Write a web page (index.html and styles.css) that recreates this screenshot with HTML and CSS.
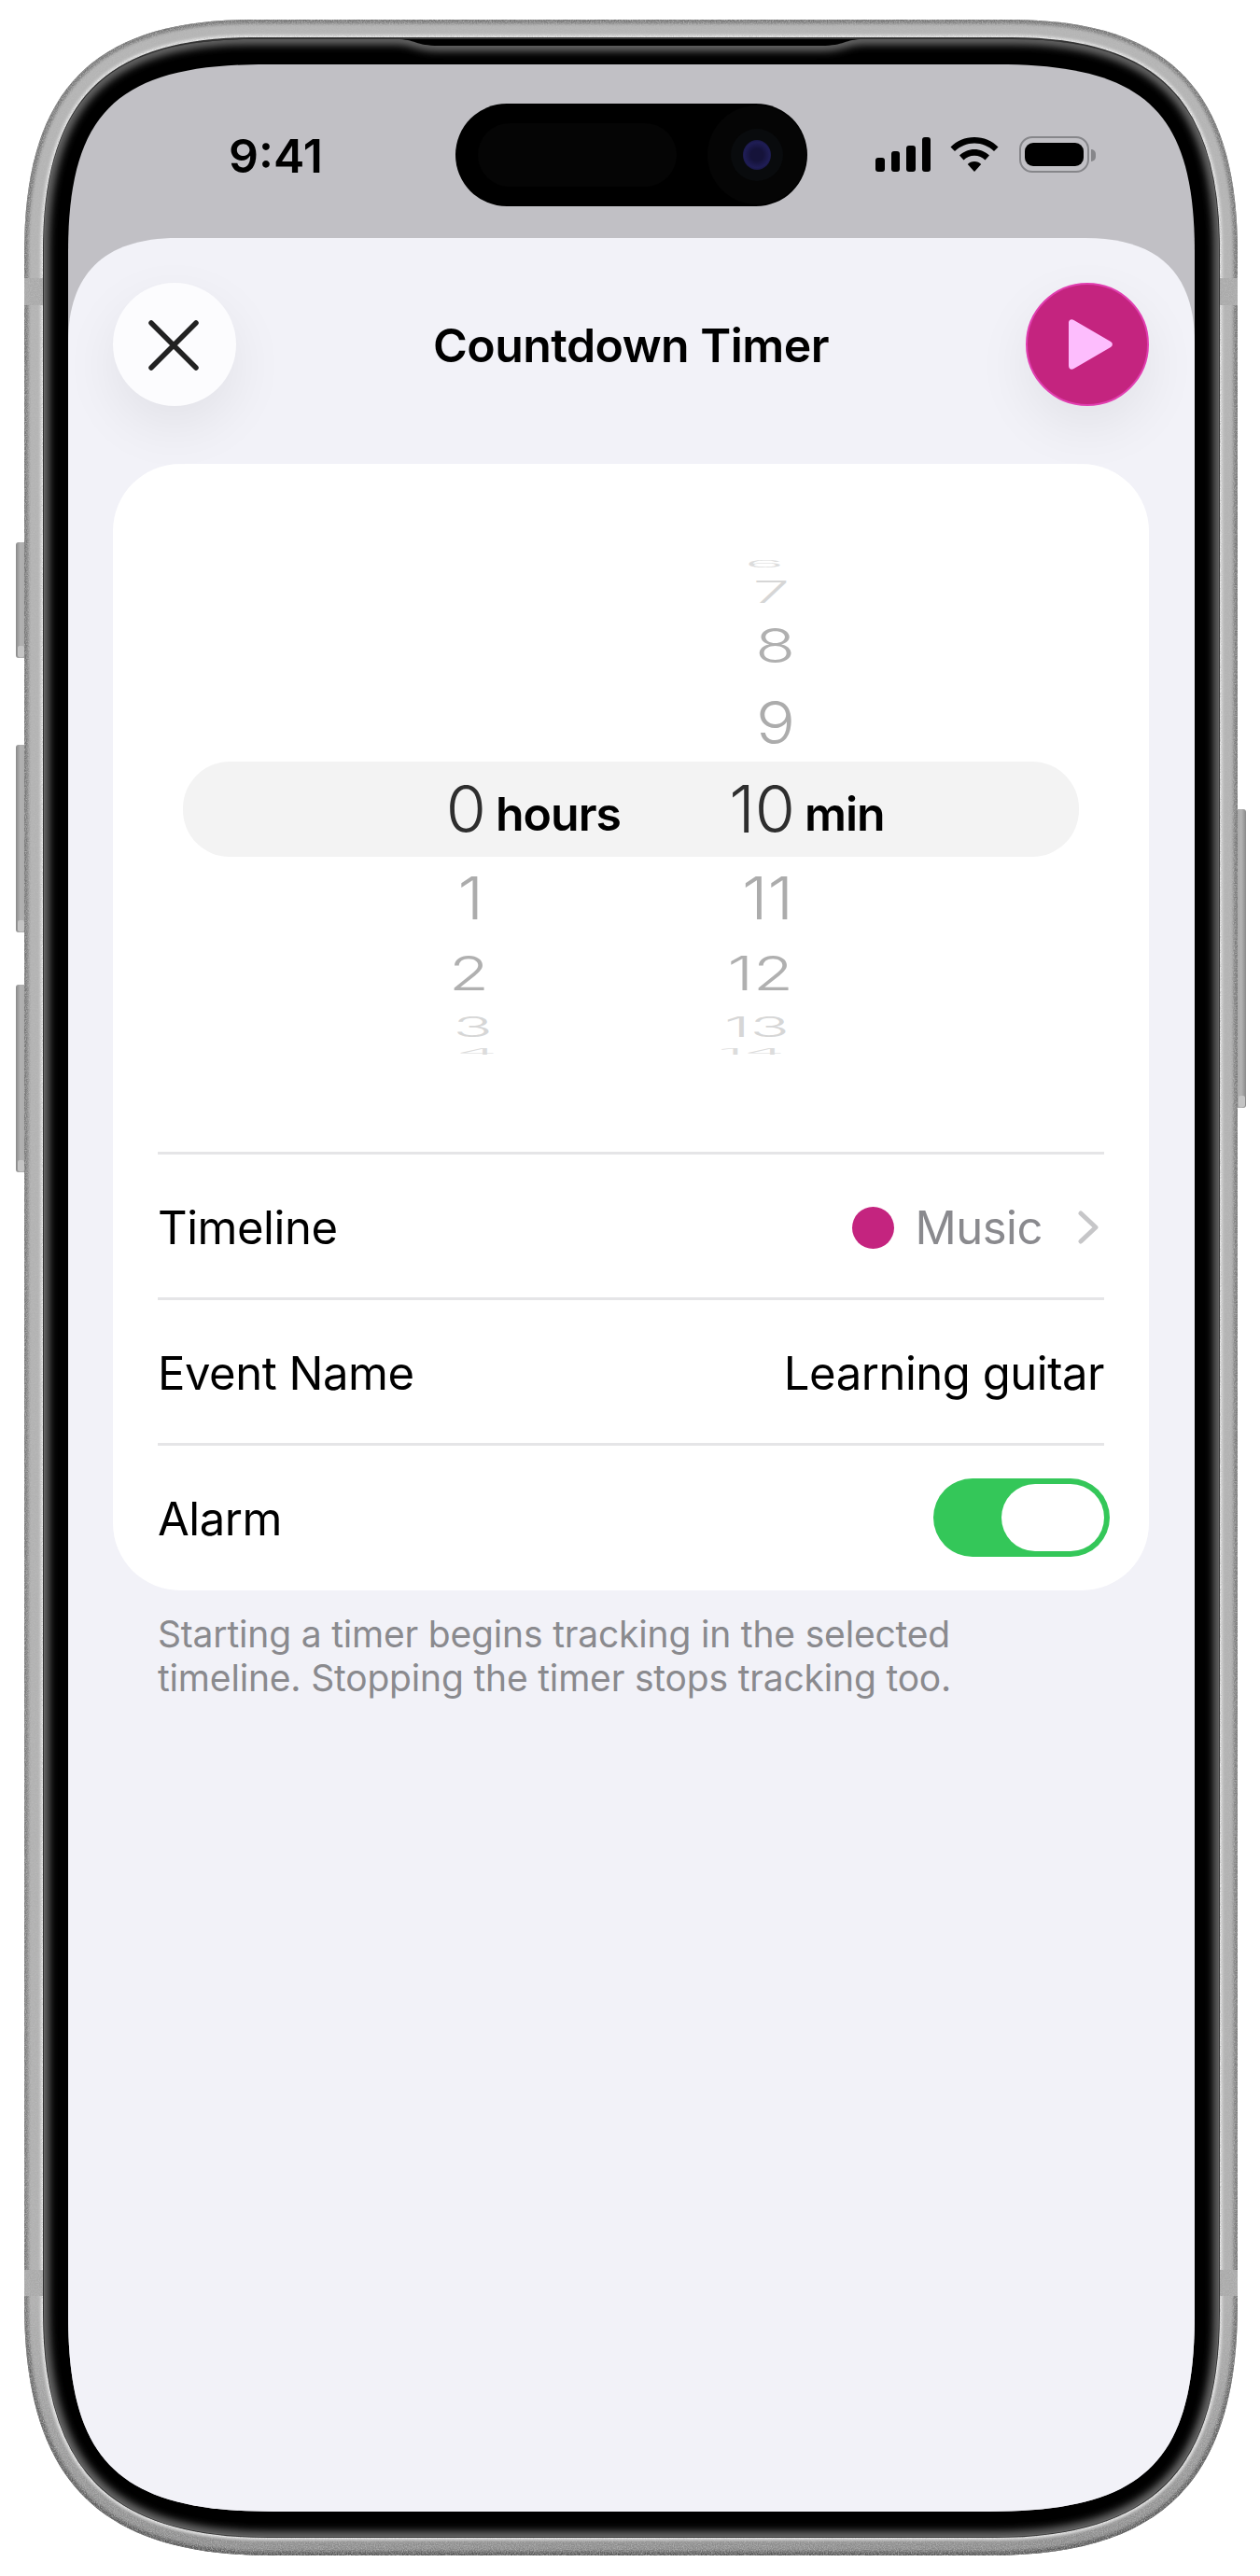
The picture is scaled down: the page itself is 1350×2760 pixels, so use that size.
FILE: index.html
```html
<!DOCTYPE html>
<html lang="en">
<head>
    <meta charset="UTF-8">
    <meta name="viewport" content="width=device-width, initial-scale=1.0">
    <title>Countdown Timer</title>
    <link rel="stylesheet" href="styles.css">
</head>
<body>

<div class="device">
    <!-- Phone body: side buttons, metal band, black bezel -->
    <svg class="frame" width="1350" height="2760" viewBox="0 0 1350 2760">
        <defs>
            <path id="bodyShape" d="M271 21H1081C1252.5 21 1326 96 1326 271V2468C1326 2657 1246.5 2738 1061 2738H291C105.5 2738 26 2657 26 2468V271C26 96 99.5 21 271 21Z"/>
            <path id="bezelShape" d="M269 41H1084C1239.4 41 1306 108.8 1306 267V2478C1306 2646 1234 2718 1066 2718H287C119 2718 47 2646 47 2478V267C47 108.8 113.6 41 269 41Z"/>
            <path id="glowShape" d="M269 42H425C445 42 445 49 470 49H880C905 49 905 42 925 42H1084C1239.4 42 1306 108.8 1306 267V2478C1306 2646 1234 2718 1066 2718H287C119 2718 47 2646 47 2478V267C47 108.8 113.6 42 269 42Z"/>
            <clipPath id="bodyClip"><use href="#bodyShape"/></clipPath>
            <clipPath id="glowClip"><use href="#glowShape"/></clipPath>
            <linearGradient id="metal" x1="0" y1="0" x2="0" y2="1">
                <stop offset="0" stop-color="#b4b4b4"/>
                <stop offset="0.9" stop-color="#b0b0b0"/>
                <stop offset="1" stop-color="#8a8a8a"/>
            </linearGradient>
            <linearGradient id="edge" x1="0" y1="0" x2="0" y2="1">
                <stop offset="0" stop-color="#747474"/>
                <stop offset="0.85" stop-color="#7c7c7c"/>
                <stop offset="1" stop-color="#555"/>
            </linearGradient>
            <linearGradient id="sideBtn" x1="0" y1="0" x2="1" y2="0">
                <stop offset="0" stop-color="#8a8a8a"/>
                <stop offset="0.35" stop-color="#b2b2b2"/>
                <stop offset="1" stop-color="#a6a6a6"/>
            </linearGradient>
            <filter id="blur1" x="-5%" y="-5%" width="110%" height="110%"><feGaussianBlur stdDeviation="1.5"/></filter>
            <filter id="blur4" x="-5%" y="-5%" width="110%" height="110%"><feGaussianBlur stdDeviation="4"/></filter>
            <filter id="grain" x="0" y="0" width="100%" height="100%">
                <feTurbulence type="fractalNoise" baseFrequency="0.8" numOctaves="2" seed="4"/>
                <feColorMatrix values="0 0 0 0 0.5  0 0 0 0 0.5  0 0 0 0 0.5  1.6 0 0 0 -0.55"/>
            </filter>
        </defs>

        <g class="side-buttons">
            <rect x="17" y="581" width="14" height="124" rx="3" fill="url(#sideBtn)"/>
            <rect x="17" y="798" width="14" height="201" rx="3" fill="url(#sideBtn)"/>
            <rect x="17" y="1055" width="14" height="201" rx="3" fill="url(#sideBtn)"/>
            <rect x="1321" y="867" width="14" height="320" rx="3" fill="url(#sideBtn)" transform="rotate(180 1328 1027)"/>
            <rect x="19" y="692" width="7" height="12" rx="2" fill="#c4c4c4"/>
            <rect x="19" y="986" width="7" height="12" rx="2" fill="#c4c4c4"/>
            <rect x="19" y="1243" width="7" height="12" rx="2" fill="#c4c4c4"/>
            <rect x="1327" y="1174" width="7" height="12" rx="2" fill="#c4c4c4"/>
        </g>

        <use href="#bodyShape" fill="url(#metal)"/>
        <g clip-path="url(#bodyClip)">
            <use href="#bodyShape" fill="none" stroke="url(#edge)" stroke-width="9" filter="url(#blur1)"/>
            <use href="#bezelShape" fill="none" stroke="#ececec" stroke-width="7" filter="url(#blur1)"/>
            <!-- antenna bands -->
            <g fill="#a9a9a9">
                <rect x="26" y="298" width="20" height="29"/>
                <rect x="1306" y="298" width="20" height="29"/>
                <rect x="26" y="2432" width="20" height="28"/>
                <rect x="1306" y="2432" width="20" height="28"/>
            </g>
            <rect x="0" y="0" width="1350" height="2760" filter="url(#grain)"/>
        </g>
        <use href="#bezelShape" fill="#000" stroke="#333" stroke-width="2"/>
        <g clip-path="url(#glowClip)">
            <use href="#glowShape" fill="none" stroke="#707070" stroke-width="11" filter="url(#blur4)"/>
        </g>
    </svg>

    <div class="screen">
        <div class="status-bar">
            <span class="clock">9:41</span>
            <div class="status-icons">
                <div class="signal">
                    <i class="bar bar-1"></i><i class="bar bar-2"></i><i class="bar bar-3"></i><i class="bar bar-4"></i>
                </div>
                <svg class="wifi" width="52" height="37" viewBox="0 0 52 37">
                    <path d="M26 0C16 0 7 4 .5 10.500L5 15C11 9.500 18 6.500 26 6.500S41 9.500 47 15L51.500 10.500C45 4 36 0 26 0Z"/>
                    <path d="M26 13C20 13 14.500 15.500 10 19.500L14.500 24.500C17.500 21.500 21.500 19.800 26 19.800S34.500 21.500 37.500 24.500L42 19.500C37.500 15.500 32 13 26 13Z"/>
                    <path d="M26 26C23 26 20.500 27.200 18.800 29L26 37 33.200 29C31.500 27.200 29 26 26 26Z"/>
                </svg>
                <div class="battery"><div class="battery-level"></div></div>
                <div class="battery-nub"></div>
            </div>
        </div>

        <!-- Dynamic island -->
        <div class="island">
            <div class="island-pill"></div>
            <div class="camera"><div class="camera-inner"><div class="lens"></div></div></div>
        </div>

        <div class="sheet">
            <div class="header">
                <button class="round-btn close-btn" type="button" aria-label="Close">
                    <svg class="close-icon" width="54" height="54" viewBox="0 0 54 54">
                        <path d="M3 3L51 51M51 3L3 51" fill="none" stroke="#222" stroke-width="5.500" stroke-linecap="round"/>
                    </svg>
                </button>
                <h1 class="title">Countdown Timer</h1>
                <button class="round-btn play-btn" type="button" aria-label="Start">
                    <svg class="play-icon" width="50" height="56" viewBox="0 0 50 56">
                        <path d="M2 5C2 1.500 5 .5 7.500 2L47 25C49.500 26.500 49.500 29.500 47 31L7.500 54C5 55.500 2 54.500 2 51Z" fill="#fdbdfd"/>
                    </svg>
                </button>
            </div>

            <div class="card">
                <!-- Hours and minutes wheels -->
                <div class="picker">
                    <div class="picker-highlight"></div>
                    <div class="wheel wheel-hours">
                        <div class="row row-a"></div>
                        <div class="row row-b"></div>
                        <div class="row row-c"></div>
                        <div class="row row-d"></div>
                        <div class="row row-selected"><span class="num">0</span><span class="unit">hours</span></div>
                        <div class="row row-e"><span class="num">1</span></div>
                        <div class="row row-f"><span class="num">2</span></div>
                        <div class="row row-g"><span class="num">3</span></div>
                        <div class="row row-h"><span class="num">4</span></div>
                    </div>
                    <div class="wheel wheel-minutes">
                        <div class="row row-a"><span class="num">6</span></div>
                        <div class="row row-b"><span class="num">7</span></div>
                        <div class="row row-c"><span class="num">8</span></div>
                        <div class="row row-d"><span class="num">9</span></div>
                        <div class="row row-selected"><span class="num">10</span><span class="unit">min</span></div>
                        <div class="row row-e"><span class="num">11</span></div>
                        <div class="row row-f"><span class="num">12</span></div>
                        <div class="row row-g"><span class="num">13</span></div>
                        <div class="row row-h"><span class="num">14</span></div>
                    </div>
                </div>

                <div class="settings">
                    <div class="setting">
                        <span>Timeline</span>
                        <div class="timeline-value">
                            <i class="dot"></i>
                            <span class="muted">Music</span>
                            <svg class="chevron" width="22" height="36" viewBox="0 0 22 36">
                                <path d="M3 3L19 18L3 33" fill="none" stroke="#c6c6c8" stroke-width="5" stroke-linecap="round" stroke-linejoin="round"/>
                            </svg>
                        </div>
                    </div>
                    <div class="setting">
                        <span>Event Name</span>
                        <span>Learning guitar</span>
                    </div>
                    <div class="setting">
                        <span>Alarm</span>
                        <div class="toggle"><div class="toggle-knob"></div></div>
                    </div>
                </div>
            </div>

            <p class="note">Starting a timer begins tracking in the selected<br>timeline. Stopping the timer stops tracking too.</p>
        </div>
    </div>
</div>

</body>
</html>
```

FILE: styles.css
```css
body {
    margin: 0;
    background-color: #fff;
    font-family: 'Inter', 'Liberation Sans', sans-serif;
    color: #000;
}

.device {
    position: relative;
    width: 1350px;
    height: 2760px;
    padding: 69px 70px 69px 73px;
    box-sizing: border-box;
}

.frame {
    position: absolute;
    top: 0;
    left: 0;
}

.screen {
    position: relative;
    width: 1207px;
    height: 2622px;
    background-color: #c1c0c5;
    clip-path: path('M212 0H995C1154 0 1207 50.5 1207 202V2411C1207 2569 1152 2622 987 2622H220C55 2622 0 2569 0 2411V202C0 50.5 53 0 212 0Z');
}

/* Status bar */
.status-bar {
    height: 186px;
    padding: 73px 106px 0 172px;
    box-sizing: border-box;
    display: flex;
    justify-content: space-between;
}

.clock {
    font-size: 50px;
    font-weight: 600;
    line-height: 50px;
    height: 50px;
}

.status-icons {
    display: flex;
    align-items: flex-start;
    padding-top: 5px;
}

.signal {
    display: flex;
    align-items: flex-end;
    gap: 7px;
    height: 37px;
}

.bar {
    width: 9.500px;
    background-color: #000;
    border-radius: 3px;
}

.bar-1 { height: 15px; }
.bar-2 { height: 22px; }
.bar-3 { height: 28px; }
.bar-4 { height: 37px; }

.wifi {
    margin-left: 21px;
}

.battery {
    margin-left: 22px;
    margin-top: -1px;
    width: 75px;
    height: 39px;
    padding: 5px 4px;
    box-sizing: border-box;
    border: 2.500px solid #86868a;
    border-radius: 14px;
}

.battery-level {
    height: 100%;
    background-color: #000;
    border-radius: 9px;
}

.battery-nub {
    margin: 13px 0 0 2px;
    width: 5px;
    height: 13px;
    background-color: #86868a;
    border-radius: 0 5px 5px 0;
}

.island {
    position: absolute;
    top: 42px;
    left: 415px;
    width: 377px;
    height: 110px;
    background-color: #000;
    border-radius: 55px;
}

.island-pill {
    position: absolute;
    top: 21px;
    left: 24px;
    width: 213px;
    height: 68px;
    background-color: #050505;
    border-radius: 34px;
}

.camera {
    position: absolute;
    top: 2px;
    right: 1px;
    width: 106px;
    height: 106px;
    display: flex;
    align-items: center;
    justify-content: center;
    background-color: #050505;
    border-radius: 50%;
}

.camera-inner {
    width: 56px;
    height: 56px;
    display: flex;
    align-items: center;
    justify-content: center;
    background-color: #090b0d;
    border-radius: 50%;
}

.lens {
    width: 30px;
    height: 32px;
    background: radial-gradient(circle, #15133a 30%, #1f1d55 62%, #08081a 100%);
    border-radius: 50%;
}

/* Sheet */
.sheet {
    height: 2436px;
    padding: 48px 49px 0 48px;
    box-sizing: border-box;
    background-color: #f2f2f8;
    clip-path: path('M117 0H1090C1170 0 1207 40 1207 112V2436H0V112C0 40 37 0 117 0Z');
}

.header {
    display: flex;
    align-items: center;
    justify-content: space-between;
    margin-bottom: 62px;
}

.round-btn {
    width: 132px;
    height: 132px;
    padding: 0;
    display: flex;
    align-items: center;
    justify-content: center;
    border: none;
    border-radius: 50%;
    box-shadow: 0 22px 60px rgba(0, 0, 0, 0.07);
}

.close-btn {
    background-color: #fcfcfe;
}

.close-icon {
    margin: 2px 2px 0 0;
}

.play-btn {
    background-color: #c4247f;
    border: 2px solid #e13fb0;
    box-sizing: border-box;
}

.play-icon {
    margin-left: 7px;
}

.title {
    margin: 0;
    padding-top: 2px;
    font-size: 50px;
    font-weight: 600;
    letter-spacing: -0.55px;
}

.card {
    background-color: #fff;
    border-radius: 72px;
    padding: 98px 0 2px;
}

/* Time picker */
.picker {
    position: relative;
    display: flex;
    padding-bottom: 100px;
}

.picker-highlight {
    position: absolute;
    top: 221px;
    left: 75px;
    width: 960px;
    height: 102px;
    background-color: #f3f3f3;
    border-radius: 50px;
}

.wheel {
    position: relative;
    display: flex;
    flex-direction: column;
    font-size: 70px;
    font-weight: 330;
}

.wheel-hours {
    width: 548px;
}

.wheel-minutes {
    width: 331px;
}

.row {
    display: grid;
    grid-template-columns: 1fr 148px;
    grid-template-rows: minmax(0, 1fr);
    align-items: center;
}

.num {
    grid-column: 1;
    justify-self: end;
    display: block;
    line-height: 1;
}

.row-a { height: 20px; color: #dcdcdc; }
.row-b { height: 38px; color: #d6d6d6; }
.row-c { height: 78px; color: #b0b0b0; }
.row-d { height: 85px; color: #acacac; }
.row-selected { height: 102px; color: #2e2e2e; align-items: baseline; line-height: 102px; }
.row-e { height: 87px; color: #acacac; }
.row-f { height: 75px; color: #b0b0b0; }
.row-g { height: 40px; color: #d6d6d6; }
.row-h { height: 14px; color: #dcdcdc; }

.row-selected .num { line-height: 102px; }

.row-a .num { transform: translateX(-12px) scaleY(0.14); }
.row-b .num { transform: translateX(-6px) scaleY(0.47); }
.row-c .num { transform: scaleY(0.73); }
.row-d .num { transform: scaleY(0.91); }
.row-e .num { transform: translateX(-2px) scaleY(0.9); }
.row-f .num { transform: translateX(-2px) scaleY(0.73); }
.row-g .num { transform: translateX(-6px) scaleY(0.43); }
.row-h .num { transform: translateX(-11px) scaleY(0.12); }

.wheel-hours .row-e .num { transform: translateX(-3px) scaleY(0.9); }
.wheel-hours .row-f .num { transform: translateX(3px) scaleY(0.73); }
.wheel-hours .row-g .num { transform: translateX(7px) scaleY(0.43); }
.wheel-hours .row-h .num { transform: translateX(12px) scaleY(0.12); }

.unit {
    grid-column: 2;
    padding-left: 10px;
    font-size: 50px;
    font-weight: 560;
    letter-spacing: -1px;
    color: #000;
    transform: translateY(-2px);
}

/* Rows under the picker */
.settings {
    margin: 0 48px;
}

.setting {
    height: 156px;
    padding-top: 3px;
    box-sizing: border-box;
    display: flex;
    align-items: center;
    justify-content: space-between;
    border-top: 3px solid #e5e5e7;
    font-size: 49px;
    letter-spacing: -0.47px;
}

.timeline-value {
    display: flex;
    align-items: center;
}

.dot {
    width: 45px;
    height: 45px;
    margin-right: 22px;
    background-color: #c4247f;
    border-radius: 50%;
}

.muted {
    color: #8a8a8e;
}

.chevron {
    margin: 0 6px 0 38px;
}

.toggle {
    width: 189px;
    height: 84px;
    margin: 0 -6px 3px 0;
    padding: 6px;
    box-sizing: border-box;
    display: flex;
    justify-content: flex-end;
    background-color: #34c759;
    border-radius: 42px;
}

.toggle-knob {
    width: 110px;
    height: 72px;
    background-color: #fff;
    border-radius: 36px;
}

.note {
    margin: 23px 0 0 48px;
    font-size: 39px;
    line-height: 47px;
    letter-spacing: -0.18px;
    color: #8a8a8e;
}
```
